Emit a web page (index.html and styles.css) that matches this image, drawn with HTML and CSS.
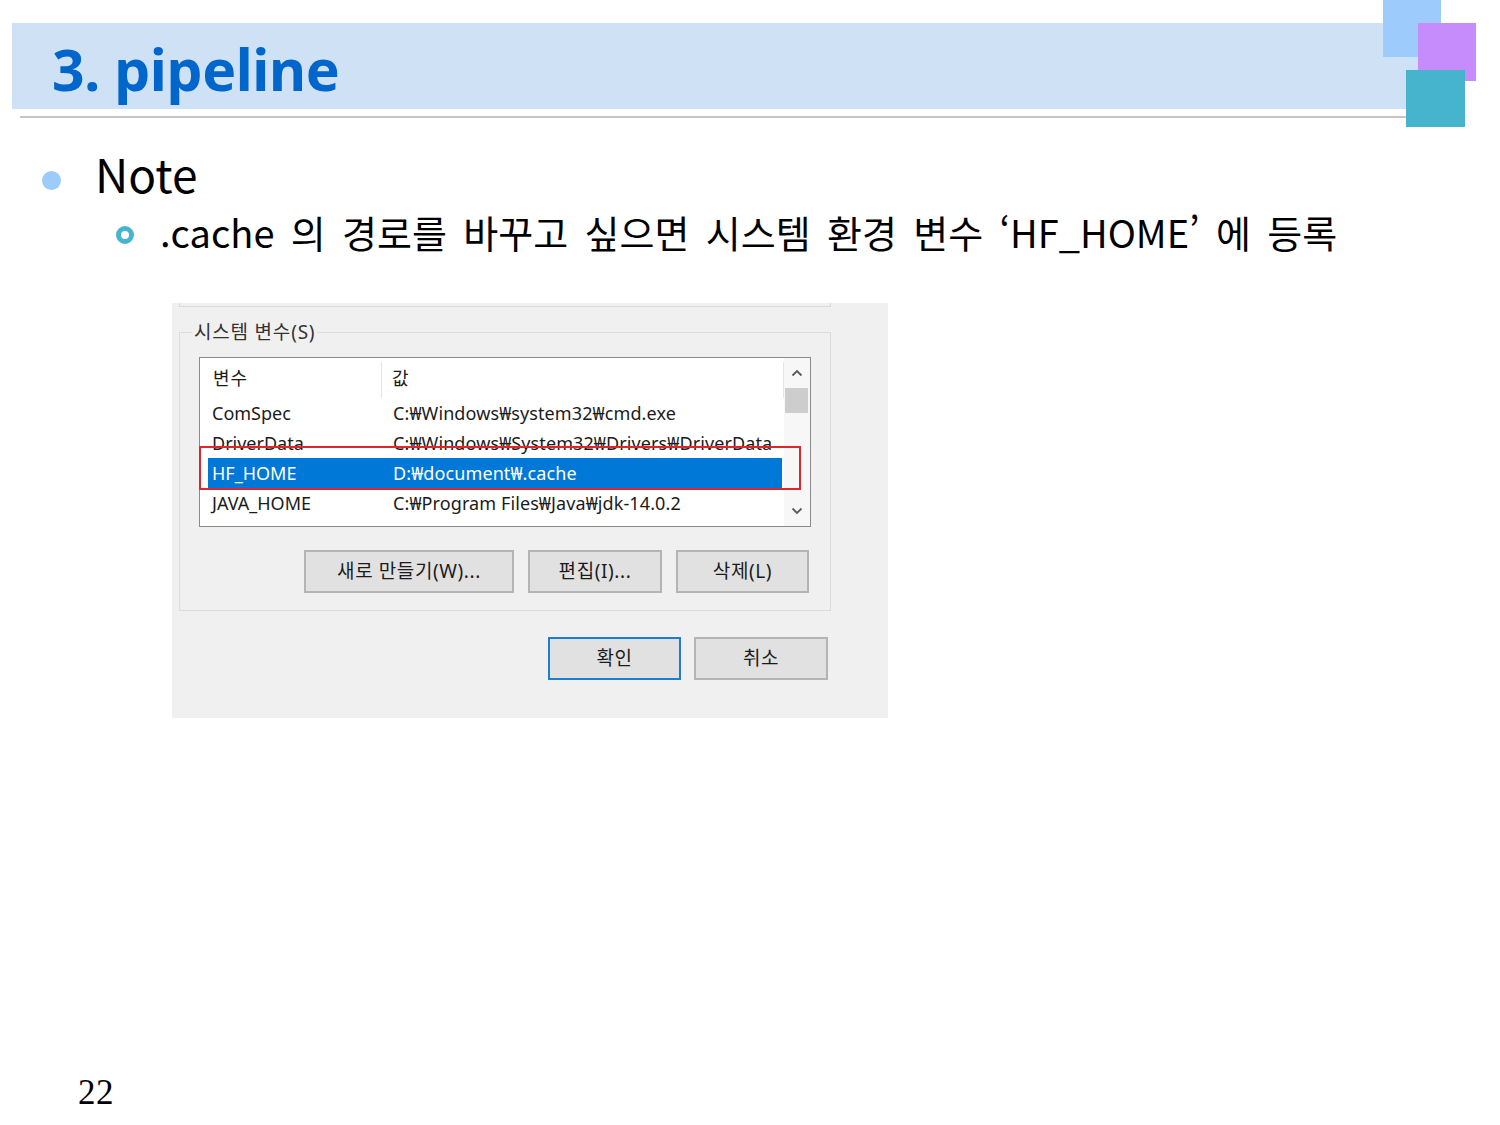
FILE: index.html
```html
<!DOCTYPE html>
<html lang="ko">
<head>
<meta charset="utf-8">
<title>3. pipeline</title>
<link rel="stylesheet" href="styles.css">
</head>
<body>
<div class="slide">
  <div class="deco">
    <span class="sq sq-light"></span>
    <span class="sq sq-purple"></span>
    <span class="sq sq-teal"></span>
  </div>

  <header class="title-band">
    <h1 class="title">3. pipeline</h1>
  </header>
  <div class="rule"></div>

  <ul class="lv1">
    <li class="lv1-item">
      <span class="dot"></span>
      <span class="lv1-text">Note</span>
    </li>
  </ul>
  <ul class="lv2">
    <li class="lv2-item">
      <span class="ring"></span>
      <span class="lv2-text">.cache 의 경로를 바꾸고 싶으면 시스템 환경 변수 ‘HF_HOME’ 에 등록</span>
    </li>
  </ul>

  <div class="dialog">
    <div class="prev-group"></div>
    <div class="group">
      <span class="legend">시스템 변수(S)</span>
      <div class="listbox">
        <div class="list-main">
          <div class="list-head">
            <span class="hcol1">변수</span>
            <span class="hcol2">값</span>
          </div>
          <div class="row"><span class="c1">ComSpec</span><span class="c2">C:₩Windows₩system32₩cmd.exe</span></div>
          <div class="row"><span class="c1">DriverData</span><span class="c2">C:₩Windows₩System32₩Drivers₩DriverData</span></div>
          <div class="row selected"><span class="c1">HF_HOME</span><span class="c2">D:₩document₩.cache</span></div>
          <div class="row"><span class="c1">JAVA_HOME</span><span class="c2">C:₩Program Files₩Java₩jdk-14.0.2</span></div>
        </div>
        <div class="scrollbar">
          <div class="sb-btn">
            <svg width="12" height="8" viewBox="0 0 12 8"><path d="M1.5 6.5 L6 2 L10.5 6.5" fill="none" stroke="#5a5a5a" stroke-width="1.8"/></svg>
          </div>
          <div class="sb-thumb"></div>
          <div class="sb-track"></div>
          <div class="sb-btn">
            <svg width="12" height="8" viewBox="0 0 12 8"><path d="M1.5 1.5 L6 6 L10.5 1.5" fill="none" stroke="#5a5a5a" stroke-width="1.8"/></svg>
          </div>
        </div>
        <div class="highlight-box"></div>
      </div>
      <div class="group-buttons">
        <button class="btn btn-new">새로 만들기(W)...</button>
        <button class="btn btn-edit">편집(I)...</button>
        <button class="btn btn-del">삭제(L)</button>
      </div>
    </div>
    <div class="dialog-buttons">
      <button class="btn btn-ok">확인</button>
      <button class="btn btn-cancel">취소</button>
    </div>
  </div>

  <div class="page-num">22</div>
</div>
</body>
</html>
```

FILE: styles.css
```css
* { box-sizing: border-box; }

html, body {
  margin: 0;
  padding: 0;
  background: #ffffff;
}

.slide {
  position: relative;
  width: 1500px;
  height: 1125px;
  display: flex;
  flex-direction: column;
  font-family: "Noto Sans CJK KR", "Noto Sans", sans-serif;
  color: #000;
  overflow: hidden;
}

/* decorative squares (overlay) */
.deco { position: absolute; left: 0; top: 0; width: 0; height: 0; z-index: 5; }
.sq { position: absolute; display: block; }
.sq-light  { left: 1383px; top: 0;    width: 58px; height: 57px; background: #9ccbfc; }
.sq-purple { left: 1418px; top: 23px; width: 58px; height: 58px; background: #c68cfc; }
.sq-teal   { left: 1406px; top: 70px; width: 59px; height: 57px; background: #46b4cd; }

/* title band */
.title-band {
  margin: 23px 0 0 12px;
  width: 1420px;
  height: 86px;
  background: #cfe2f5;
  padding: 7px 0 0 40px;
}
.title {
  margin: 0;
  font-family: "Noto Sans", sans-serif;
  font-weight: 700;
  font-size: 57px;
  line-height: 79px;
  letter-spacing: -0.4px;
  color: #0066cc;
}

.rule {
  margin: 7px 0 0 20px;
  width: 1400px;
  height: 2px;
  background: #c6c6c6;
}

/* bullets */
.lv1, .lv2 { list-style: none; margin: 0; padding: 0; }

.lv1 { margin-top: 25px; padding-left: 42px; }
.lv1-item { display: flex; align-items: flex-start; }
.dot {
  flex: none;
  width: 19px;
  height: 19px;
  margin-top: 28px;
  border-radius: 50%;
  background: #9ccbfc;
}
.lv1-text {
  margin-left: 34px;
  font-size: 46px;
  line-height: 60px;
}

.lv2 { margin-top: 6px; padding-left: 116px; }
.lv2-item { display: flex; align-items: flex-start; }
.ring {
  flex: none;
  width: 18px;
  height: 18px;
  margin-top: 17px;
  border-radius: 50%;
  border: 5px solid #46b4cd;
  background: #fff;
}
.lv2-text {
  margin-left: 26px;
  font-size: 38px;
  line-height: 46px;
  word-spacing: 5.7px;
  white-space: nowrap;
}

/* dialog screenshot */
.dialog {
  margin: 48px 0 0 172px;
  width: 716px;
  height: 415px;
  background: #f0f0f0;
  padding-left: 7px;
  font-family: "Noto Sans", "Noto Sans CJK KR", sans-serif;
  font-size: 18px;
  color: #1b1b1b;
}

.prev-group {
  width: 652px;
  height: 4px;
  border: 1px solid #dadada;
  border-top: none;
}

.group {
  position: relative;
  margin-top: 25px;
  width: 652px;
  border: 1px solid #dcdcdc;
  padding: 24px 19px 17px 19px;
}
.legend {
  position: absolute;
  left: 12px;
  top: -12px;
  padding: 0 2px;
  background: #f0f0f0;
  line-height: 22px;
  font-size: 19px;
  letter-spacing: 0.8px;
  color: #333;
}

.listbox {
  position: relative;
  width: 612px;
  height: 170px;
  background: #fff;
  border: 1px solid #8a8a8a;
  display: flex;
}
.list-main { flex: 1; }
.list-head {
  display: flex;
  height: 40px;
  align-items: center;
}
.hcol1 {
  width: 182px;
  height: 36px;
  margin-top: 4px;
  padding-left: 13px;
  line-height: 32px;
  letter-spacing: 1px;
  border-right: 1px solid #e5e5e5;
}
.hcol2 {
  flex: 1;
  height: 36px;
  margin-top: 4px;
  padding-left: 10px;
  line-height: 32px;
  border-right: 1px solid #e5e5e5;
}
.row {
  display: flex;
  margin-left: 8px;
  width: 574px;
  height: 30px;
  line-height: 30px;
  padding-left: 4px;
  white-space: nowrap;
}
.row .c1 { width: 181px; }
.row .c2 { flex: 1; letter-spacing: 0.1px; }
.row.selected { background: #0078d7; color: #fff; }

.scrollbar {
  width: 26px;
  display: flex;
  flex-direction: column;
  background: #f7f7f7;
}
.sb-btn {
  height: 30px;
  display: flex;
  align-items: center;
  justify-content: center;
}
.sb-thumb {
  height: 25px;
  margin: 0 2px 0 1px;
  background: #cdcdcd;
}
.sb-track { flex: 1; }

.highlight-box {
  position: absolute;
  left: -1px;
  top: 88px;
  width: 602px;
  height: 44px;
  border: 2px solid #e0262c;
}

.group-buttons {
  display: flex;
  justify-content: flex-end;
  gap: 14px;
  margin-top: 23px;
  padding-right: 2px;
}
.btn {
  height: 43px;
  background: #e1e1e1;
  border: 2px solid #b4b4b4;
  font-family: "Noto Sans", "Noto Sans CJK KR", sans-serif;
  font-size: 19px;
  letter-spacing: 0.6px;
  color: #1b1b1b;
  padding: 0 0 3px 0;
}
.btn-new { width: 210px; }
.btn-edit { width: 134px; }
.btn-del { width: 133px; }

.dialog-buttons {
  display: flex;
  justify-content: flex-end;
  gap: 13px;
  margin-top: 26px;
  width: 649px;
}
.btn-ok { width: 133px; border: 2px solid #1a7fd4; }
.btn-cancel { width: 134px; }

.page-num {
  margin-top: auto;
  margin-left: 78px;
  margin-bottom: 12px;
  font-family: "Liberation Serif", serif;
  font-size: 35px;
  line-height: 40px;
  letter-spacing: 0.5px;
}
```
